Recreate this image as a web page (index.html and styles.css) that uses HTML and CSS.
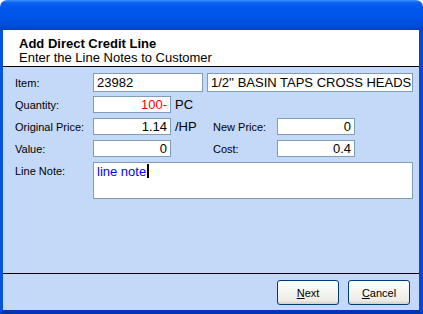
FILE: index.html
```html
<!DOCTYPE html>
<html lang="en">
<head>
    <meta charset="UTF-8">
    <title>Add Direct Credit Line</title>
    <link rel="stylesheet" href="styles.css">
</head>
<body>
    <div class="window">
        <div class="titlebar"></div>

        <div class="frame">
            <div class="header">
                <div class="header-title">Add Direct Credit Line</div>
                <div class="header-sub">Enter the Line Notes to Customer</div>
            </div>

            <div class="form">
                <div class="row row-item">
                    <label class="label">Item:</label>
                    <div class="field field-code">23982</div>
                    <div class="field field-desc">1/2'' BASIN TAPS CROSS HEADS</div>
                </div>

                <div class="row">
                    <label class="label">Quantity:</label>
                    <div class="field field-num negative">100-</div>
                    <span class="unit">PC</span>
                </div>

                <div class="row">
                    <label class="label">Original Price:</label>
                    <div class="field field-num">1.14</div>
                    <span class="unit">/HP</span>
                    <label class="label label-right">New Price:</label>
                    <div class="field field-num">0</div>
                </div>

                <div class="row">
                    <label class="label">Value:</label>
                    <div class="field field-num">0</div>
                    <span class="unit"></span>
                    <label class="label label-right">Cost:</label>
                    <div class="field field-num">0.4</div>
                </div>

                <div class="row row-note">
                    <label class="label">Line Note:</label>
                    <div class="field field-note">line note<span class="caret"></span></div>
                </div>
            </div>

            <div class="footer">
                <button class="btn"><u>N</u>ext</button>
                <button class="btn"><u>C</u>ancel</button>
            </div>
        </div>
    </div>
</body>
</html>
```

FILE: styles.css
```css
* {
    margin: 0;
    padding: 0;
    box-sizing: border-box;
}

body {
    font-family: 'Liberation Sans', Arial, sans-serif;
    font-size: 11px;
    color: #000000;
    background-color: #ffffff;
}

.window {
    width: 423px;
    height: 314px;
    display: flex;
    flex-direction: column;
}

.titlebar {
    height: 30px;
    border-radius: 7px 7px 0 0;
    background: linear-gradient(#3d8cff 0, #0a5ff0 3px, #0057ec 8px, #0054e6 18px, #004ede 25px, #0040c6 30px);
}

.frame {
    flex: 1;
    display: flex;
    flex-direction: column;
    background-color: #c4d9f7;
    border-style: solid;
    border-width: 0 4px 4px 3px;
    border-color: #0a50de #0847d4 #0036b4 #0852e0;
}

.header {
    height: 37px;
    background-color: #ffffff;
    border-bottom: 1px solid #000000;
    padding: 7px 0 0 16px;
    font-size: 13px;
    line-height: 14px;
}

.header-title {
    font-weight: bold;
}

.form {
    flex: 1;
    padding: 6px 0 0 12px;
}

.row {
    display: flex;
    align-items: center;
    height: 17px;
    margin-bottom: 5px;
}

.row-item {
    height: 19px;
    margin-bottom: 4px;
}

.row-note {
    align-items: flex-start;
    height: 37px;
}

.label {
    width: 78px;
    white-space: nowrap;
}

.row-note .label {
    padding-top: 3px;
}

.label-right {
    width: 64px;
}

.field {
    height: 100%;
    background-color: #ffffff;
    border: 1px solid #7f9db9;
    font-size: 13px;
    line-height: 15px;
    padding: 0 3px;
    white-space: nowrap;
    overflow: hidden;
}

.field-code {
    width: 110px;
    line-height: 17px;
}

.field-desc {
    width: 206px;
    margin-left: 4px;
    line-height: 17px;
}

.field-num {
    width: 78px;
    text-align: right;
}

.negative {
    color: #ff0000;
}

.unit {
    width: 42px;
    padding-left: 4px;
    font-size: 13px;
}

.field-note {
    width: 320px;
    color: #0000ff;
    line-height: 17px;
}

.caret {
    display: inline-block;
    width: 2px;
    height: 14px;
    background-color: #000000;
    vertical-align: -2px;
    margin-left: 1px;
}

.footer {
    height: 37px;
    border-top: 1px solid #000000;
    display: flex;
    justify-content: flex-end;
    gap: 9px;
    padding: 6px 9px 0 0;
}

.btn {
    width: 62px;
    height: 25px;
    font-family: inherit;
    font-size: 11px;
    color: #000000;
    border: 1px solid #003c74;
    border-radius: 3px;
    background: linear-gradient(#ffffff 0, #f4f4f0 50%, #ecebe6 85%, #d6d0c5 100%);
}
```
